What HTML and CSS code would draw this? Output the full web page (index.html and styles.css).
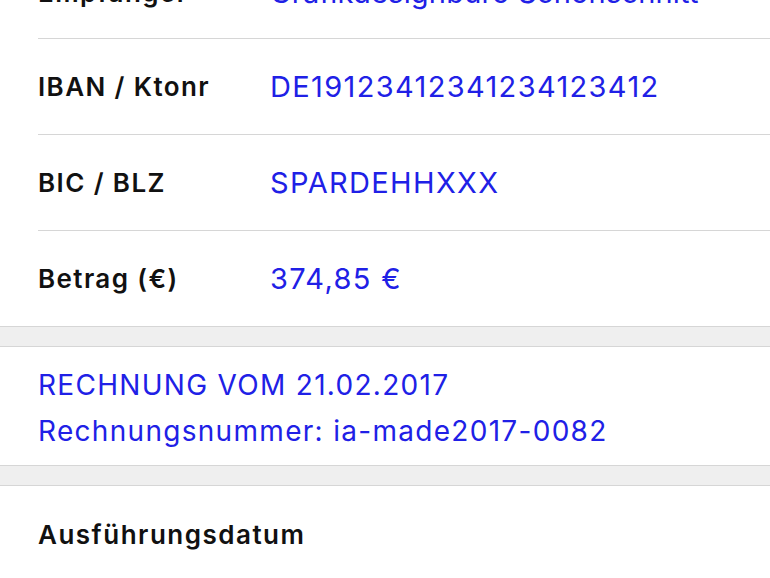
FILE: index.html
```html
<!DOCTYPE html>
<html lang="de">
<head>
<meta charset="utf-8">
<title>Überweisung</title>
<link rel="stylesheet" href="styles.css">
</head>
<body>
<div class="page">
  <section class="group first">
    <div class="row">
      <span class="label">Empfänger</span>
      <span class="value tight">Grafikdesignbüro Schönschnitt</span>
    </div>
    <div class="row">
      <span class="label">IBAN / Ktonr</span>
      <span class="value">DE19123412341234123412</span>
    </div>
    <div class="row">
      <span class="label">BIC / BLZ</span>
      <span class="value">SPARDEHHXXX</span>
    </div>
    <div class="row last">
      <span class="label">Betrag (€)</span>
      <span class="value">374,85 €</span>
    </div>
  </section>
  <div class="spacer"></div>
  <section class="group memo">
    <div class="memo-line">RECHNUNG VOM 21.02.2017</div>
    <div class="memo-line">Rechnungsnummer: ia-made2017-0082</div>
  </section>
  <div class="spacer"></div>
  <section class="group">
    <div class="row plain">
      <span class="label wide">Ausführungsdatum</span>
    </div>
  </section>
</div>
</body>
</html>
```

FILE: styles.css
```css
html, body {
  margin: 0;
  padding: 0;
  background: #ffffff;
}
body {
  font-family: Inter, "Liberation Sans", sans-serif;
  overflow: hidden;
}
.page {
  width: 770px;
}
.group {
  background: #ffffff;
}
.group.first {
  margin-top: -54px;
}
.row {
  display: flex;
  align-items: center;
  height: 95px;
  margin-left: 38px;
  border-bottom: 1px solid #d6d6d6;
}
.group.first .row:first-child {
  height: 92px;
}
.row.last, .row.plain {
  border-bottom: none;
}
.label {
  width: 232px;
  flex: none;
  font-size: 26px;
  font-weight: 600;
  letter-spacing: 1.4px;
  color: #111111;
}
.label.wide {
  width: auto;
  letter-spacing: 1.5px;
}
.value {
  font-size: 29px;
  letter-spacing: 1.35px;
  color: #2020e6;
}
.value.tight {
  letter-spacing: 0.2px;
}
.spacer {
  height: 19px;
  background: #efefef;
  border-top: 1px solid #d6d6d6;
  border-bottom: 1px solid #d6d6d6;
}
.memo {
  padding: 22px 38px 18px 38px;
  height: 78px;
  display: flex;
  flex-direction: column;
  justify-content: center;
  gap: 12px;
}
.memo-line {
  font-size: 28px;
  letter-spacing: 1.3px;
  color: #2020e6;
  line-height: 34px;
}
.plain {
  height: 96px;
  align-items: center;
}
```
